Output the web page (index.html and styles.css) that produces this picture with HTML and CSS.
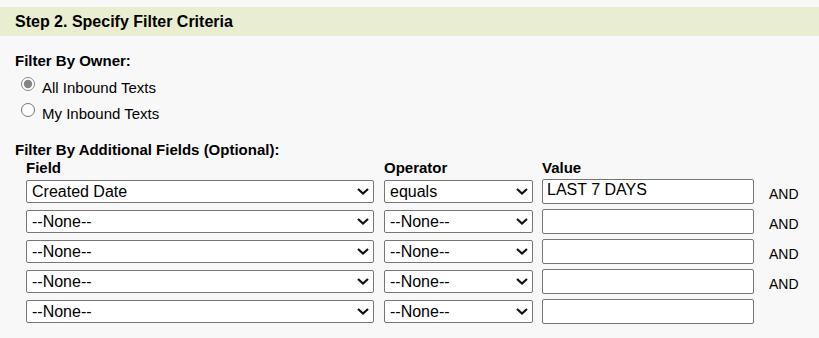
FILE: index.html
```html
<!DOCTYPE html>
<html lang="en">
<head>
    <meta charset="UTF-8">
    <meta name="viewport" content="width=device-width, initial-scale=1.0">
    <title>Filter Criteria</title>
    <link rel="stylesheet" href="styles.css">
</head>
<body>
<div class="step-header">Step 2. Specify Filter Criteria</div>

<div class="step-body">
    <!-- Owner filter -->
    <div class="section-label">Filter By Owner:</div>
    <label class="radio-row">
        <input type="radio" name="owner" value="all" checked>
        All Inbound Texts
    </label>
    <label class="radio-row">
        <input type="radio" name="owner" value="mine">
        My Inbound Texts
    </label>

    <!-- Additional field filters -->
    <div class="section-label extra">Filter By Additional Fields (Optional):</div>
    <div class="criteria">
        <div class="col-head">Field</div>
        <div class="col-head">Operator</div>
        <div class="col-head">Value</div>
        <div></div>

        <div class="select-wrap"><select class="field-select"><option>Created Date</option></select><svg class="chevron" width="12" height="7" viewBox="0 0 12 7"><path d="M1 1L6 5.5L11 1" fill="none" stroke="#111" stroke-width="2.2"/></svg></div>
        <div class="select-wrap"><select class="op-select"><option>equals</option></select><svg class="chevron" width="12" height="7" viewBox="0 0 12 7"><path d="M1 1L6 5.5L11 1" fill="none" stroke="#111" stroke-width="2.2"/></svg></div>
        <div><input type="text" class="value-input" value="LAST 7 DAYS"></div>
        <div class="and">AND</div>

        <div class="select-wrap"><select class="field-select"><option>--None--</option></select><svg class="chevron" width="12" height="7" viewBox="0 0 12 7"><path d="M1 1L6 5.5L11 1" fill="none" stroke="#111" stroke-width="2.2"/></svg></div>
        <div class="select-wrap"><select class="op-select"><option>--None--</option></select><svg class="chevron" width="12" height="7" viewBox="0 0 12 7"><path d="M1 1L6 5.5L11 1" fill="none" stroke="#111" stroke-width="2.2"/></svg></div>
        <div><input type="text" class="value-input"></div>
        <div class="and">AND</div>

        <div class="select-wrap"><select class="field-select"><option>--None--</option></select><svg class="chevron" width="12" height="7" viewBox="0 0 12 7"><path d="M1 1L6 5.5L11 1" fill="none" stroke="#111" stroke-width="2.2"/></svg></div>
        <div class="select-wrap"><select class="op-select"><option>--None--</option></select><svg class="chevron" width="12" height="7" viewBox="0 0 12 7"><path d="M1 1L6 5.5L11 1" fill="none" stroke="#111" stroke-width="2.2"/></svg></div>
        <div><input type="text" class="value-input"></div>
        <div class="and">AND</div>

        <div class="select-wrap"><select class="field-select"><option>--None--</option></select><svg class="chevron" width="12" height="7" viewBox="0 0 12 7"><path d="M1 1L6 5.5L11 1" fill="none" stroke="#111" stroke-width="2.2"/></svg></div>
        <div class="select-wrap"><select class="op-select"><option>--None--</option></select><svg class="chevron" width="12" height="7" viewBox="0 0 12 7"><path d="M1 1L6 5.5L11 1" fill="none" stroke="#111" stroke-width="2.2"/></svg></div>
        <div><input type="text" class="value-input"></div>
        <div class="and">AND</div>

        <div class="select-wrap"><select class="field-select"><option>--None--</option></select><svg class="chevron" width="12" height="7" viewBox="0 0 12 7"><path d="M1 1L6 5.5L11 1" fill="none" stroke="#111" stroke-width="2.2"/></svg></div>
        <div class="select-wrap"><select class="op-select"><option>--None--</option></select><svg class="chevron" width="12" height="7" viewBox="0 0 12 7"><path d="M1 1L6 5.5L11 1" fill="none" stroke="#111" stroke-width="2.2"/></svg></div>
        <div><input type="text" class="value-input"></div>
        <div></div>
    </div>
</div>
</body>
</html>
```

FILE: styles.css
```css
body {
    margin: 0;
    padding-top: 7px;
    background-color: #f8f8f8;
    font-family: "Liberation Sans", Arial, sans-serif;
    font-size: 15px;
    color: #000;
}
.step-header {
    background-color: #e8eecf;
    padding: 6px 15px 5px;
    font-size: 16px;
    font-weight: bold;
    line-height: 18px;
}
.step-body {
    padding: 16px 15px 0;
}
.section-label {
    font-weight: bold;
    line-height: 17px;
    margin-bottom: 5px;
}
.section-label.extra {
    margin-top: 15px;
    margin-bottom: 1px;
}
.radio-row {
    display: flex;
    align-items: center;
    height: 26px;
}
.radio-row input {
    width: 14px;
    height: 14px;
    margin: -7px 7px 0 6px;
    accent-color: #858585;
}
.criteria {
    display: grid;
    grid-template-columns: 358px 158px 227px auto;
    row-gap: 5px;
    margin-left: 11px;
    align-items: start;
}
.col-head {
    font-weight: bold;
    line-height: 17px;
    margin-bottom: -2px;
}
.select-wrap {
    position: relative;
    width: max-content;
}
.criteria select {
    display: block;
    box-sizing: border-box;
    height: 23px;
    margin-top: 1px;
    padding: 0 24px 0 5px;
    appearance: none;
    font-family: "Liberation Sans", Arial, sans-serif;
    font-size: 16px;
    color: #000;
    background-color: #fff;
    border: 1px solid #767676;
    border-radius: 2px;
}
.chevron {
    position: absolute;
    right: 5px;
    top: 9px;
    pointer-events: none;
}
.field-select {
    width: 348px;
}
.op-select {
    width: 149px;
}
.value-input {
    display: block;
    box-sizing: border-box;
    width: 212px;
    height: 25px;
    padding: 1px 4px 4px;
    font-family: "Liberation Sans", Arial, sans-serif;
    font-size: 16px;
    line-height: 18px;
    color: #000;
    background-color: #fff;
    border: 1px solid #767676;
    border-radius: 2px;
}
.and {
    line-height: 17px;
    margin-top: 7px;
    font-size: 14px;
}
```
